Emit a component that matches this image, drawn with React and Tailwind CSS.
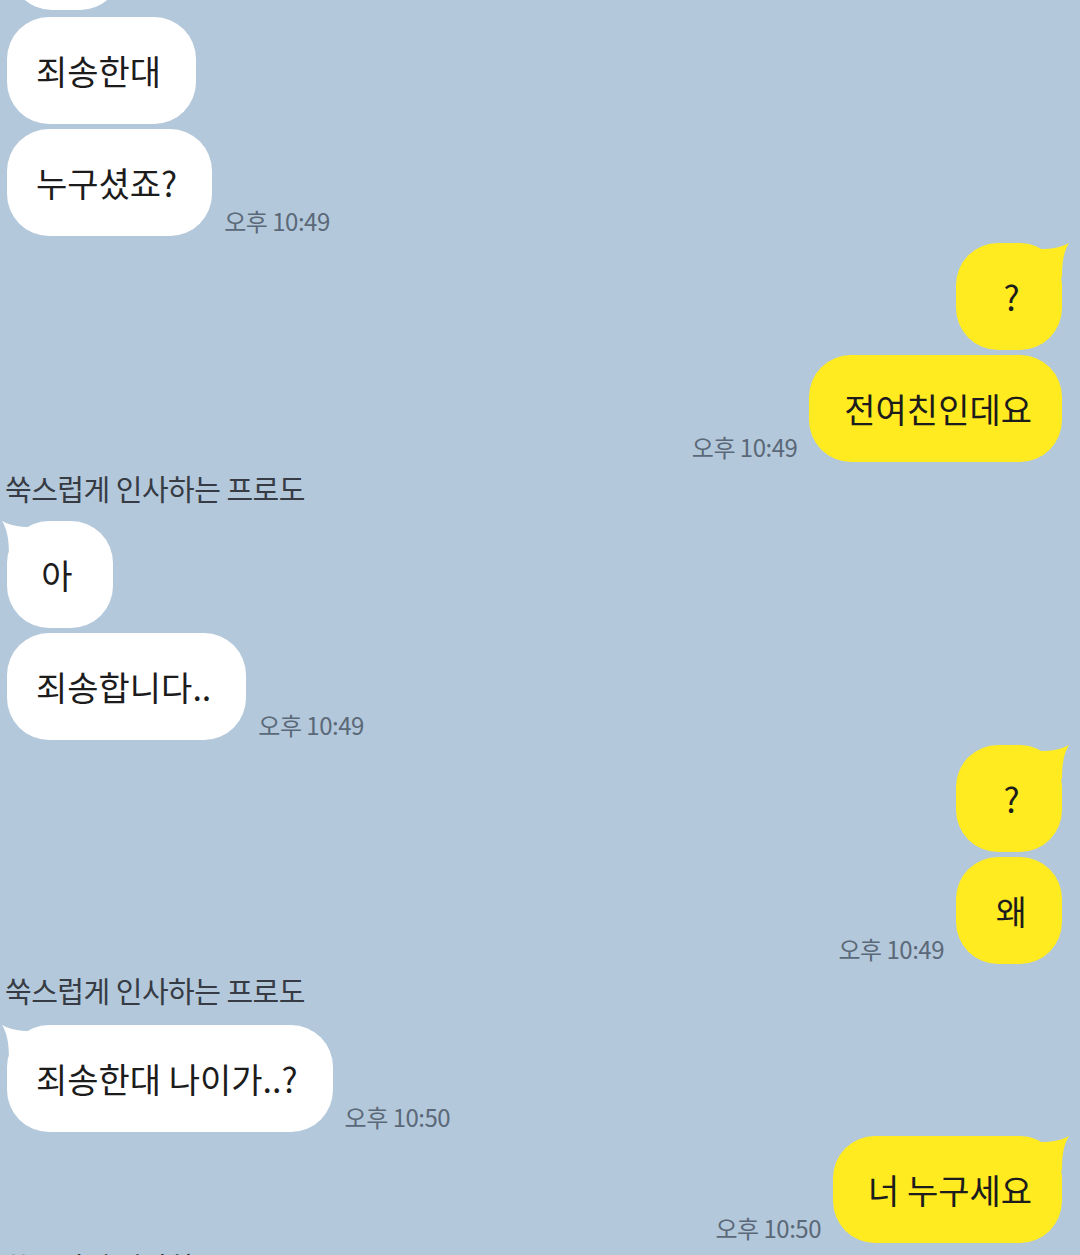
const FONT = { fontFamily: '"Noto Sans CJK KR", "Noto Sans", sans-serif' };

function Tail({ side, color }) {
  if (side === 'left') {
    return (
      <svg className="absolute top-0 -left-[6px]" width="34" height="34" viewBox="0 0 34 34">
        <path d="M34 6 C22 6 12 6 1 0 C6 8 8 18 8 34 L34 34 Z" fill={color} />
      </svg>
    );
  }
  return (
    <svg className="absolute top-0 -right-[8px]" width="34" height="34" viewBox="0 0 34 34">
      <path d="M0 6 C12 6 22 6 33 0 C28 8 26 18 26 34 L0 34 Z" fill={color} />
    </svg>
  );
}

function Bubble({ text, mine, tail }) {
  const color = mine ? '#ffeb1f' : '#ffffff';
  return (
    <div
      className={`relative h-[107px] min-w-[106px] flex items-center justify-center rounded-[42px] text-[34px] text-[#1c1c1c] ${mine ? 'bg-[#ffeb1f] pl-[35px] pr-[30px]' : 'bg-white pl-[29px] pr-[35px]'}`}
      style={FONT}
    >
      {tail && <Tail side={mine ? 'right' : 'left'} color={color} />}
      <span className="relative whitespace-nowrap leading-none">{text}</span>
    </div>
  );
}

function Time({ t }) {
  return (
    <span className="text-[24px] leading-none text-[#5b6878] whitespace-nowrap mb-[3px] tracking-[-0.5px]" style={FONT}>
      {t}
    </span>
  );
}

function Row({ text, mine, tail, time }) {
  return (
    <div className={`flex items-end gap-[12px] ${mine ? 'justify-end pr-[18px]' : 'justify-start pl-[7px]'}`}>
      {mine && time && <Time t={time} />}
      <Bubble text={text} mine={mine} tail={tail} />
      {!mine && time && <Time t={time} />}
    </div>
  );
}

function Name() {
  return (
    <div className="pl-[5px] h-[30px] flex items-center text-[29px] leading-none text-[#363b44] tracking-[-0.5px]" style={FONT}>
      쑥스럽게 인사하는 프로도
    </div>
  );
}

export default function App() {
  return (
    <div className="w-[1080px] h-[1255px] overflow-hidden bg-[#b3c8db]">
      <div className="flex flex-col">
        <div className="mt-[-96px] pl-[10px]">
          <div className="h-[106px] w-[112px] rounded-[42px] bg-white" />
        </div>
        <div className="mt-[7px] flex flex-col gap-[5px]">
          <Row text="죄송한대" />
          <Row text="누구셨죠?" time="오후 10:49" />
        </div>
        <div className="mt-[7px] flex flex-col gap-[5px]">
          <Row text="?" mine tail />
          <Row text="전여친인데요" mine time="오후 10:49" />
        </div>
        <div className="mt-[11px]">
          <Name />
        </div>
        <div className="mt-[18px] flex flex-col gap-[5px]">
          <Row text="아" tail />
          <Row text="죄송합니다.." time="오후 10:49" />
        </div>
        <div className="mt-[5px] flex flex-col gap-[5px]">
          <Row text="?" mine tail />
          <Row text="왜" mine time="오후 10:49" />
        </div>
        <div className="mt-[11px]">
          <Name />
        </div>
        <div className="mt-[20px] flex flex-col gap-[4px]">
          <Row text="죄송한대 나이가..?" tail time="오후 10:50" />
          <Row text="너 누구세요" mine tail time="오후 10:50" />
        </div>
        <div className="mt-[8px]">
          <Name />
        </div>
      </div>
    </div>
  );
}
